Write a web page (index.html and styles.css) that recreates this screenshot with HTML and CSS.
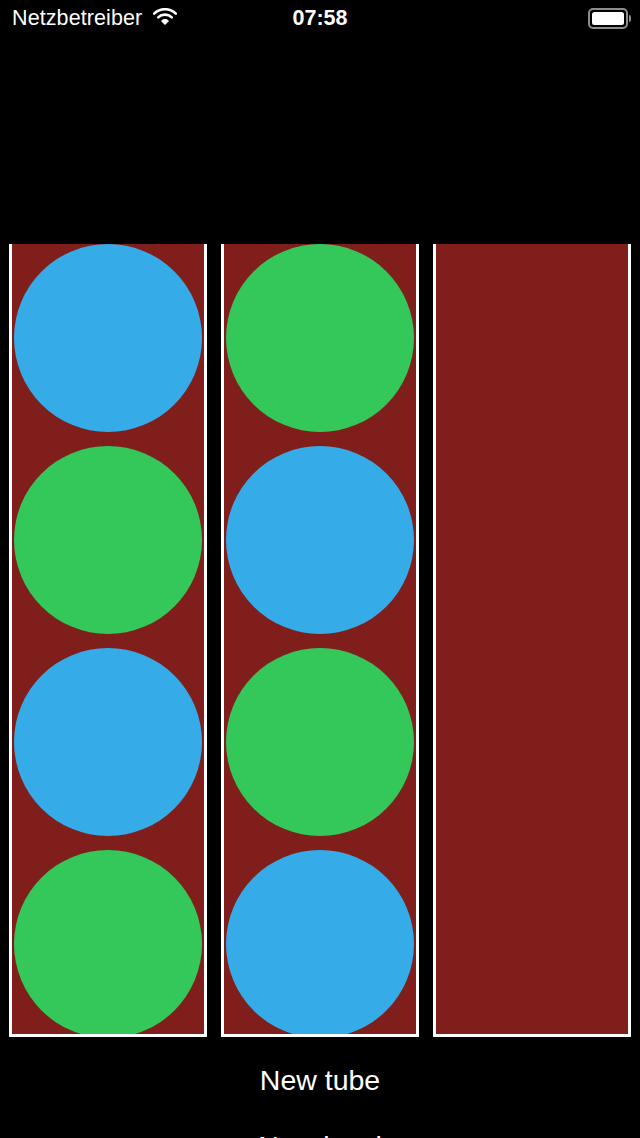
FILE: index.html
```html
<!DOCTYPE html>
<html>
<head>
<meta charset="utf-8">
<link rel="stylesheet" href="styles.css">
</head>
<body>
<div class="status">
  <div class="carrier">
    <span>Netzbetreiber</span>
    <svg class="wifi" width="24" height="17" viewBox="0 0 24 17">
      <path d="M1.2 5.6 A15.5 15.5 0 0 1 22.8 5.6" fill="none" stroke="#fff" stroke-width="2.6" stroke-linecap="round"/>
      <path d="M5.2 9.4 A9.8 9.8 0 0 1 18.8 9.4" fill="none" stroke="#fff" stroke-width="2.6" stroke-linecap="round"/>
      <path d="M9 13 A4.4 4.4 0 0 1 15 13 L12 16 Z" fill="#fff" stroke="#fff" stroke-width="1.6" stroke-linejoin="round"/>
    </svg>
  </div>
  <div class="time">07:58</div>
  <div class="battery"><div class="batt-body"><div class="batt-fill"></div></div><div class="batt-nub"></div></div>
</div>

<div class="tubes">
  <div class="tube">
    <div class="ball blue"></div>
    <div class="ball green"></div>
    <div class="ball blue"></div>
    <div class="ball green"></div>
  </div>
  <div class="tube">
    <div class="ball green"></div>
    <div class="ball blue"></div>
    <div class="ball green"></div>
    <div class="ball blue"></div>
  </div>
  <div class="tube"></div>
</div>

<div class="buttons">
  <div class="btn">New tube</div>
  <div class="btn">New level</div>
</div>
</body>
</html>
```
FILE: styles.css
```css
html, body {
  margin: 0;
  padding: 0;
  background: #000;
  height: 1138px;
  overflow: hidden;
}
body {
  font-family: "Liberation Sans", Arial, sans-serif;
  color: #fff;
}
.status {
  position: relative;
  height: 40px;
  display: flex;
  align-items: flex-start;
  justify-content: space-between;
  padding: 0 9px 0 12px;
}
.carrier {
  display: flex;
  align-items: flex-start;
  font-size: 21.5px;
  line-height: 36px;
  letter-spacing: 0.1px;
}
.wifi {
  margin-left: 11px;
  margin-top: 8px;
}
.time {
  position: absolute;
  left: 0;
  right: 0;
  top: 0;
  text-align: center;
  font-weight: bold;
  font-size: 21.5px;
  line-height: 36px;
}
.battery {
  display: flex;
  align-items: center;
  margin-top: 8px;
}
.batt-body {
  width: 32px;
  height: 13px;
  border: 2px solid #8c8c8c;
  border-radius: 5px;
  padding: 2px;
}
.batt-fill {
  width: 100%;
  height: 100%;
  background: #fff;
  border-radius: 2.5px;
}
.batt-nub {
  width: 2px;
  height: 7px;
  background: #8c8c8c;
  border-radius: 0 2px 2px 0;
  margin-left: 1px;
}
.tubes {
  margin-top: 204px;
  display: flex;
  gap: 14px;
  padding: 0 9px;
  height: 793px;
}
.tube {
  box-sizing: border-box;
  width: 198px;
  height: 793px;
  background: #7f1e1a;
  border: 3px solid #fff;
  border-top: none;
  overflow: hidden;
  display: flex;
  flex-direction: column;
  align-items: center;
  gap: 14px;
}
.ball {
  flex: none;
  width: 188px;
  height: 188px;
  border-radius: 50%;
}
.blue { background: #35ace7; }
.green { background: #34c759; }
.buttons {
  display: flex;
  flex-direction: column;
  align-items: center;
  gap: 32px;
  margin-top: 26px;
}
.btn {
  font-size: 28.5px;
  line-height: 34px;
}
```
